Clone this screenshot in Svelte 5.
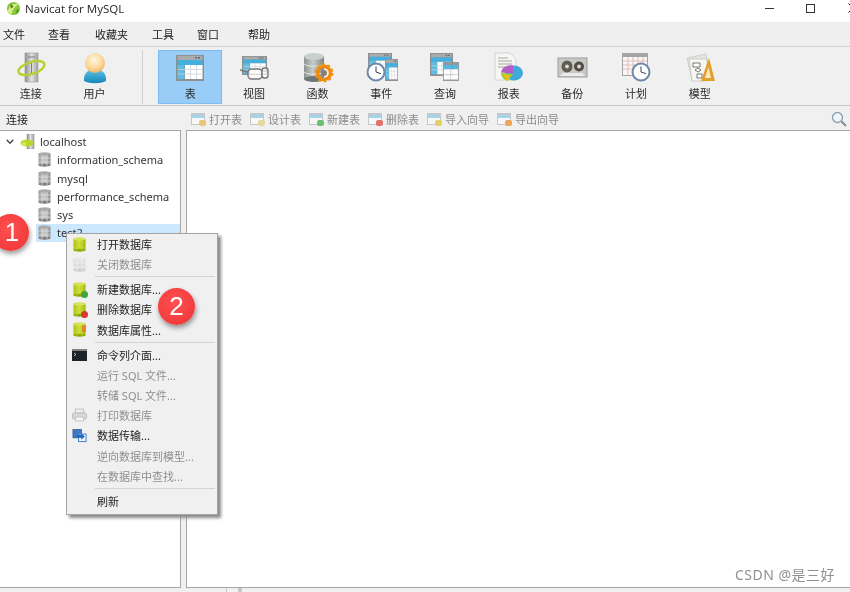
<script>
  const menus = [
    { t: '文件', w: 45 }, { t: '查看', w: 47 }, { t: '收藏夹', w: 57 },
    { t: '工具', w: 45 }, { t: '窗口', w: 51 }, { t: '帮助', w: 40 }
  ];
  const tools = [
    { t: '表', i: 'table', active: true }, { t: '视图', i: 'view' }, { t: '函数', i: 'func' },
    { t: '事件', i: 'event' }, { t: '查询', i: 'query' }, { t: '报表', i: 'report' },
    { t: '备份', i: 'backup' }, { t: '计划', i: 'plan' }, { t: '模型', i: 'model' }
  ];
  const subs = [
    { t: '打开表', c: '#e8c877' }, { t: '设计表', c: '#e6d9a0' }, { t: '新建表', c: '#6fbf73' },
    { t: '删除表', c: '#e0736a' }, { t: '导入向导', c: '#e6cf6a' }, { t: '导出向导', c: '#eda65a' }
  ];
  const dbs = ['information_schema', 'mysql', 'performance_schema', 'sys', 'test2'];
  const ctx = [
    { t: '打开数据库', i: 'db' }, { t: '关闭数据库', i: 'dbgray', off: true }, { sep: true },
    { t: '新建数据库...', i: 'dbadd' }, { t: '删除数据库', i: 'dbdel' }, { t: '数据库属性...', i: 'dbprop' }, { sep: true },
    { t: '命令列介面...', i: 'term' }, { t: '运行 SQL 文件...', off: true }, { t: '转储 SQL 文件...', off: true },
    { t: '打印数据库', i: 'print', off: true }, { t: '数据传输...', i: 'transfer' },
    { t: '逆向数据库到模型...', off: true }, { t: '在数据库中查找...', off: true }, { sep: true },
    { t: '刷新' }
  ];
</script>

{#snippet grid(x, y, w, h)}
  <svg {x} {y} width={w} height={h} viewBox="0 0 28 26" preserveAspectRatio="none">
    <rect width="28" height="26" fill="#8d8f91" />
    <rect x="1.5" y="1" width="25" height="4" fill="#a9abad" />
    <rect x="19" y="2" width="2" height="1.5" fill="#666" /><rect x="22" y="2" width="2" height="1.5" fill="#666" />
    <rect x="1.5" y="5" width="25" height="5" fill="#45b0de" />
    <rect x="1.5" y="10" width="7" height="14" fill="#5fbce3" />
    <rect x="9" y="10" width="17.5" height="14" fill="#fff" />
    <path d="M1.5 14.5h25M1.5 19h25M14.5 10v14M20.5 10v14" stroke="#cfd3d6" stroke-width=".8" fill="none" />
  </svg>
{/snippet}

{#snippet clock(cx, cy, r)}
  <circle {cx} {cy} {r} fill="#fff" stroke="#6d88a8" stroke-width="2" />
  <path d="M{cx} {cy - r * .65}V{cy}L{cx + r * .6} {cy + r * .2}" stroke="#345" stroke-width="1" fill="none" />
{/snippet}

{#snippet toolIcon(n)}
  <svg class="ticon" viewBox="0 0 40 34" width="40" height="34" aria-hidden="true">
    {#if n === 'conn'}
      <rect x="14" y="3" width="13" height="29" fill="url(#steel)" stroke="#9a9a9a" stroke-width=".6" />
      <path d="M17 7h7M20.5 12v13" stroke="#666" stroke-width=".8" />
      <ellipse cx="20.5" cy="18" rx="13.5" ry="6" transform="rotate(-18 20.5 18)" fill="none" stroke="#b4d42c" stroke-width="2.4" />
    {:else if n === 'user'}
      <path d="M9 31c-1-8 5-12 11-12s12 4 11 12c-6 3-16 3-22 0z" fill="url(#blue)" />
      <circle cx="20" cy="13" r="10" fill="url(#peach)" />
    {:else if n === 'table'}
      {@render grid(6, 5, 28, 26)}
    {:else if n === 'view'}
      {@render grid(8, 6, 25, 19)}
      <path d="M6 20l8 2M28 21h6" stroke="#777" stroke-width="1.4" />
      <rect x="14" y="19" width="14" height="10" rx="3.5" fill="#ffffffb0" stroke="#777" stroke-width="1.4" />
      <rect x="28" y="18" width="6" height="10" rx="2.5" fill="#ffffffb0" stroke="#777" stroke-width="1.4" />
    {:else if n === 'func'}
      <rect x="6" y="6" width="20" height="23" fill="url(#cyl)" />
      <ellipse cx="16" cy="6.5" rx="10" ry="3.5" fill="#c9d0cc" />
      <ellipse cx="16" cy="29" rx="10" ry="3" fill="#6d7775" />
      <path d="M6 14c3 3 17 3 20 0M6 22c3 3 17 3 20 0" stroke="#e3e6e4" fill="none" />
      <circle cx="26" cy="23" r="6.5" fill="none" stroke="#f08a10" stroke-width="3.4" />
      <circle cx="26" cy="23" r="8.5" fill="none" stroke="#f0950f" stroke-width="2" stroke-dasharray="3 2.4" />
      <circle cx="26" cy="23" r="3" fill="#8b7f70" />
    {:else if n === 'event'}
      {@render grid(7, 3, 24, 20)}
      {@render grid(24, 9, 13, 22)}
      {@render clock(15, 22, 8.5)}
    {:else if n === 'query'}
      {@render grid(5, 3, 23, 23)}
      <svg x="18" y="12" width="16" height="19" viewBox="0 0 28 26" preserveAspectRatio="none" opacity=".9">
        <rect width="28" height="26" fill="#8d8f91" />
        <rect x="1.5" y="4" width="25" height="6" fill="#45b0de" />
        <rect x="1.5" y="10" width="25" height="14" fill="#fff" />
        <path d="M1.5 17h25M13 10v14" stroke="#bbb" />
      </svg>
    {:else if n === 'report'}
      <path d="M6 3h15l6 6v21H6z" fill="#f6f6f4" stroke="#c4c4c4" stroke-width=".7" />
      <path d="M9 8h10M9 11h14M9 14h14M9 17h8" stroke="#9a9a9a" stroke-width=".9" />
      <ellipse cx="25" cy="23" rx="9" ry="7.5" fill="#3fa9dc" />
      <path d="M24 15.5c-6-1-11 2-12 7l12 1z" fill="#b35ec6" />
      <path d="M12 23c0 4 3 7 7 8l5-7z" fill="#a9c92f" />
      <path d="M15 25l6 0-3 6z" fill="#f0c020" />
    {:else if n === 'backup'}
      <rect x="6" y="8" width="29" height="19" fill="#c8c8c6" stroke="#9b9b9b" />
      <ellipse cx="15" cy="16.5" rx="5.5" ry="6" fill="#625c50" />
      <circle cx="15" cy="16.5" r="2" fill="#d8d8d8" />
      <circle cx="27" cy="16.5" r="5" fill="#504b42" />
      <circle cx="27" cy="16.5" r="2" fill="#d8d8d8" />
      <path d="M8 26l3-3h19l3 3z" fill="#ececec" />
    {:else if n === 'plan'}
      <rect x="6" y="3" width="26" height="23" fill="#a3a4a6" />
      <rect x="7" y="7" width="24" height="18" fill="#fbf6f4" />
      <path d="M7 11h24M7 15h24M7 19h24M12 7v18M17 7v18M22 7v18M27 7v18" stroke="#d7b4b4" stroke-width=".8" />
      {@render clock(25, 22, 8.5)}
    {:else if n === 'model'}
      <path d="M7 8l19-4 4 23-18 3z" fill="#e6e4df" stroke="#bbb" stroke-width=".6" />
      <path d="M9 9h18v22H12z" fill="#f5f5f2" stroke="#b5b5b5" stroke-width=".6" />
      <path d="M13 13h7v4h-7zM15 20l3-2 3 2-3 2zM17 24h5v4h-5z" fill="#fff" stroke="#555" stroke-width=".8" />
      <path d="M29 8l6 23H21z" fill="#e0a02a" />
      <path d="M28.5 17l2.5 11h-6z" fill="#f7e9c4" />
    {/if}
  </svg>
{/snippet}

{#snippet dbIcon(color)}
  <svg class="db" viewBox="0 0 13 15" width="13" height="15" aria-hidden="true">
    <rect x=".5" y="1.5" width="12" height="12" fill={color === 'gray' ? 'url(#gray)' : color === 'pale' ? '#dcdcdc' : 'url(#lime)'} />
    <ellipse cx="6.5" cy="2" rx="6" ry="1.8" fill={color === 'gray' ? '#aaa' : color === 'pale' ? '#e8e8e8' : '#d5e25a'} />
    <ellipse cx="6.5" cy="13.2" rx="6" ry="1.5" fill={color === 'gray' ? '#7d7d7d' : color === 'pale' ? '#ccc' : '#8ea80a'} />
    <path d="M4 3v11M9 3v11M.5 6h12M.5 10h12" stroke={color === 'gray' ? '#e4e4e4' : color === 'pale' ? '#f3f3f3' : '#c5d62e'} stroke-width=".7" />
  </svg>
{/snippet}

{#snippet ctxIcon(n)}
  {#if n === 'db'}
    {@render dbIcon('lime')}
  {:else if n === 'dbgray'}
    {@render dbIcon('pale')}
  {:else if n === 'dbadd' || n === 'dbdel' || n === 'dbprop'}
    <span class="stack">
      {@render dbIcon('lime')}
      <i class={n}></i>
    </span>
  {:else if n === 'term'}
    <svg viewBox="0 0 15 12" width="15" height="12" aria-hidden="true">
      <rect width="15" height="12" fill="#1f2326" />
      <rect width="15" height="2" fill="#7f8488" />
      <path d="M2 4l2 1.5-2 1.5" stroke="#ddd" stroke-width=".8" fill="none" />
    </svg>
  {:else if n === 'print'}
    <svg viewBox="0 0 15 14" width="15" height="14" aria-hidden="true">
      <rect x="3.5" y="1" width="8" height="4" fill="#eee" stroke="#c4c4c4" />
      <rect x=".5" y="5" width="14" height="6" rx="1.5" fill="#d8d8d8" stroke="#bcbcbc" />
      <rect x="3.5" y="9" width="8" height="4" fill="#f4f4f4" stroke="#c4c4c4" />
    </svg>
  {:else if n === 'transfer'}
    <svg viewBox="0 0 16 15" width="16" height="15" aria-hidden="true">
      <rect x="1" y="1" width="9" height="9" fill="#3f79c4" stroke="#24508e" stroke-width=".7" />
      <rect x="7" y="6" width="8" height="8" fill="#eaf2fb" stroke="#3f79c4" />
      <path d="M5 7h5V5l3.5 3.5L10 12v-2H5z" fill="#1f63bd" />
    </svg>
  {/if}
{/snippet}

<div class="app">
  <svg class="defs" width="0" height="0" aria-hidden="true">
    <defs>
      <linearGradient id="steel" x1="0" x2="1" y1="0" y2="0"><stop offset="0" stop-color="#8d8d8d" /><stop offset=".5" stop-color="#e2e2e2" /><stop offset="1" stop-color="#a0a0a0" /></linearGradient>
      <linearGradient id="gray" x1="0" x2="1" y1="0" y2="0"><stop offset="0" stop-color="#9a9a9a" /><stop offset=".5" stop-color="#c9c9c9" /><stop offset="1" stop-color="#8c8c8c" /></linearGradient>
      <linearGradient id="lime" x1="0" x2="1" y1="0" y2="0"><stop offset="0" stop-color="#a8c20e" /><stop offset=".5" stop-color="#d4e03a" /><stop offset="1" stop-color="#96b208" /></linearGradient>
      <linearGradient id="cyl" x1="0" x2="1" y1="0" y2="0"><stop offset="0" stop-color="#8a9391" /><stop offset=".45" stop-color="#c7cdca" /><stop offset="1" stop-color="#7b8482" /></linearGradient>
      <linearGradient id="blue" x1="0" x2="0" y1="0" y2="1"><stop offset="0" stop-color="#5ec4e6" /><stop offset="1" stop-color="#1687b8" /></linearGradient>
      <radialGradient id="peach" cx=".45" cy=".35" r=".7"><stop offset="0" stop-color="#fff6e0" /><stop offset=".6" stop-color="#fbd79a" /><stop offset="1" stop-color="#eeaa58" /></radialGradient>
    </defs>
  </svg>

  <header class="title">
    <svg class="logo" viewBox="0 0 16 16" width="15" height="15" aria-hidden="true">
      <circle cx="8" cy="8" r="7" fill="#8cc63f" />
      <path d="M2 11C3 5 8 2 14 3 11 5 7 8 6 14 4 14 3 13 2 11z" fill="#d8ee8a" />
      <path d="M5 3l3 3-3 2z" fill="#3f7f1f" /><path d="M12 8l2 3-4 3z" fill="#4f9a2a" />
    </svg>
    <span class="title-text">Navicat for MySQL</span>
    <div class="winbtns">
      <span class="min"></span>
      <span class="max"></span>
      <svg class="close" viewBox="0 0 10 10" width="10" height="10" aria-hidden="true"><path d="M.5.5l9 9M9.5.5l-9 9" stroke="#333" /></svg>
    </div>
  </header>

  <nav class="menubar">
    {#each menus as m}<span style="width:{m.w}px">{m.t}</span>{/each}
  </nav>

  <section class="toolbar">
    <div class="tool"><div class="ti">{@render toolIcon('conn')}</div><span>连接</span></div>
    <div class="tool"><div class="ti">{@render toolIcon('user')}</div><span>用户</span></div>
    <div class="vsep"></div>
    {#each tools as t}
      <div class="tool" class:active={t.active}><div class="ti">{@render toolIcon(t.i)}</div><span>{t.t}</span></div>
    {/each}
  </section>

  <section class="subbar">
    <span class="conn-label">连接</span>
    <div class="subtools">
      {#each subs as s}
        <span class="sub">
          <svg viewBox="0 0 15 14" width="15" height="14" aria-hidden="true">
            <rect y="1" width="14" height="12" fill="#c3c8cb" />
            <rect x="1" y="3" width="12" height="3" fill="#a5d4ea" />
            <rect x="1" y="6" width="12" height="6" fill="#f7f7f7" />
            <rect x="8" y="8" width="7" height="6" rx="2" fill={s.c} />
          </svg>
          {s.t}
        </span>
      {/each}
    </div>
    <svg class="search" viewBox="0 0 16 16" width="16" height="16" aria-hidden="true">
      <circle cx="6.5" cy="6.5" r="5" fill="#eef5fa" stroke="#8ea2b0" stroke-width="1.4" />
      <path d="M10.5 10.5l4.5 4.5" stroke="#7c8b96" stroke-width="2" />
    </svg>
  </section>

  <main class="panes">
    <aside class="tree">
      <div class="host">
        <svg class="chev" viewBox="0 0 8 6" width="8" height="6" aria-hidden="true"><path d="M.7.7L4 4.3 7.3.7" stroke="#444" stroke-width="1.3" fill="none" /></svg>
        <svg viewBox="0 0 16 15" width="16" height="15" aria-hidden="true">
          <rect x="7" y="0" width="7" height="15" fill="url(#steel)" stroke="#888" stroke-width=".5" />
          <ellipse cx="7" cy="9" rx="6.5" ry="3.4" fill="#b9d62a" />
          <circle cx="4" cy="10" r="2" fill="#dbe95c" />
        </svg>
        <span>localhost</span>
      </div>
      {#each dbs as d}
        <div class="dbrow" class:sel={d === 'test2'}>{@render dbIcon('gray')}<span>{d}</span></div>
      {/each}
    </aside>
    <div class="content"></div>
  </main>

  <footer class="status"><i></i><i></i></footer>
  <span class="mark">CSDN @是三好</span>

  <div class="ctx">
    {#each ctx as c}
      {#if c.sep}
        <div class="ctx-sep"></div>
      {:else}
        <div class="ctx-item" class:off={c.off}>
          <span class="ctx-ic">{#if c.i}{@render ctxIcon(c.i)}{/if}</span>
          <span>{c.t}</span>
        </div>
      {/if}
    {/each}
  </div>

  <span class="badge b1">1</span>
  <span class="badge b2">2</span>
</div>

<style>
  :global(body) { margin: 0; background: #fff; }
  .app {
    position: relative; width: 850px; height: 592px; overflow: hidden;
    display: flex; flex-direction: column; background: #f0f0f0; color: #222;
    font: 11px "Noto Sans", "Noto Sans CJK SC", sans-serif;
    filter: blur(0.4px);
  }
  .defs { position: absolute; }
  .title { height: 22px; background: #fff; display: flex; align-items: center; padding-left: 6px; padding-bottom: 6px; box-sizing: border-box; flex: none; }
  .title-text { margin-left: 4px; font-size: 11.5px; color: #333; }
  .winbtns { margin-left: auto; display: flex; align-items: center; }
  .min { width: 9px; height: 1px; background: #333; margin-right: 32px; }
  .max { width: 7px; height: 7px; border: 1px solid #333; margin-right: 33px; }
  .close { margin-right: -8px; }
  .menubar { height: 25px; flex: none; display: flex; align-items: center; padding-left: 3px; padding-bottom: 1px; box-sizing: border-box; background: #efefef; border-bottom: 1px solid #d2d2d2; }
  .toolbar { height: 59px; flex: none; display: flex; align-items: flex-start; padding-top: 3px; box-sizing: border-box; border-bottom: 1px solid #c6c6c6; background: #f0f0f0; }
  .tool { width: 63.7px; height: 54px; box-sizing: border-box; display: flex; flex-direction: column; align-items: center; border: 1px solid transparent; flex: none; }
  .tool:first-child { margin-left: -1px; }
  .ti { height: 34px; margin-top: -1px; }
  .ticon { display: block; }
  .tool > span { margin-top: 2px; line-height: 16px; font-size: 11px; color: #2a2a2a; }
  .tool.active { background: #99ccf6; border-color: #7dbcf3; }
  .vsep { width: 1px; height: 54px; background: #cfcfcf; margin: 0 15px 0 16px; flex: none; }
  .subbar { height: 24px; flex: none; display: flex; align-items: center; padding-top: 1px; box-sizing: border-box; background: #f0f0f0; }
  .conn-label { margin-left: 6px; width: 185px; color: #222; }
  .subtools { display: flex; gap: 8px; color: #8b8b8b; }
  .sub { display: flex; align-items: center; gap: 3px; }
  .search { margin-left: auto; margin-right: 3px; }
  .panes { flex: 1; display: flex; gap: 5px; min-height: 0; }
  .tree { width: 181px; box-sizing: border-box; background: #fff; border: solid #a6a6a6; border-width: 1px 1px 1px 0; padding-top: 1.6px; color: #333; font-size: 11px; flex: none; }
  .host { height: 18.2px; display: flex; align-items: center; padding-left: 6px; }
  .chev { margin-right: 6px; }
  .host span { margin-left: 4px; }
  .dbrow { height: 18.2px; display: flex; align-items: center; margin-left: 36px; padding-left: 2px; gap: 6px; }
  .dbrow.sel { background: #cce8ff; }
  .db { display: block; }
  .content { flex: 1; background: #fff; border: solid #a6a6a6; border-width: 1px 0 1px 1px; }
  .status { height: 4px; flex: none; display: flex; background: #f0f0f0; }
  .status i { width: 1px; height: 4px; background: #c8c8c8; margin-left: 226px; }
  .status i + i { margin-left: 11px; width: 4px; }
  .mark { position: absolute; left: 735px; top: 564px; font-size: 14px; letter-spacing: .5px; color: #909090; white-space: nowrap; }
  .ctx { position: absolute; left: 66px; top: 233px; width: 152px; box-sizing: border-box; border: 1px solid #a4a4a4; background: #f0f0f0; padding: 0 0 3px; box-shadow: 3px 3px 3px #8a8a8a; color: #222; }
  .ctx-item { height: 20.2px; display: flex; align-items: center; }
  .ctx-item.off { color: #8f8f8f; }
  .ctx-ic { width: 15px; margin-left: 5px; margin-right: 10px; display: flex; justify-content: center; align-items: center; }
  .ctx-sep { height: 4.8px; margin-left: 28px; position: relative; }
  .ctx-sep::after { content: ""; position: absolute; left: 0; right: 2px; top: 2px; height: 1px; background: #d4d4d4; }
  .stack { position: relative; display: block; }
  .stack i { position: absolute; right: -2px; bottom: -1px; width: 7px; height: 7px; border-radius: 50%; }
  .stack .dbadd { background: #3fa53f; }
  .stack .dbdel { background: #d63a2e; }
  .stack .dbprop { background: #d98b2b; width: 4px; height: 7px; right: 0; top: 3px; border-radius: 1px; }
  .badge { position: absolute; border-radius: 50%; color: #fff; display: flex; align-items: center; justify-content: center; font-family: "Liberation Sans", sans-serif; background: radial-gradient(circle at 45% 40%, #ff5050, #f23c3c 70%, #e03232); box-shadow: 1px 3px 5px #0006; }
  .b1 { left: -8px; top: 214px; width: 37px; height: 37px; font-size: 26px; padding-left: 3px; box-sizing: border-box; }
  .b2 { left: 158px; top: 288px; width: 37px; height: 37px; font-size: 26px; }
</style>
